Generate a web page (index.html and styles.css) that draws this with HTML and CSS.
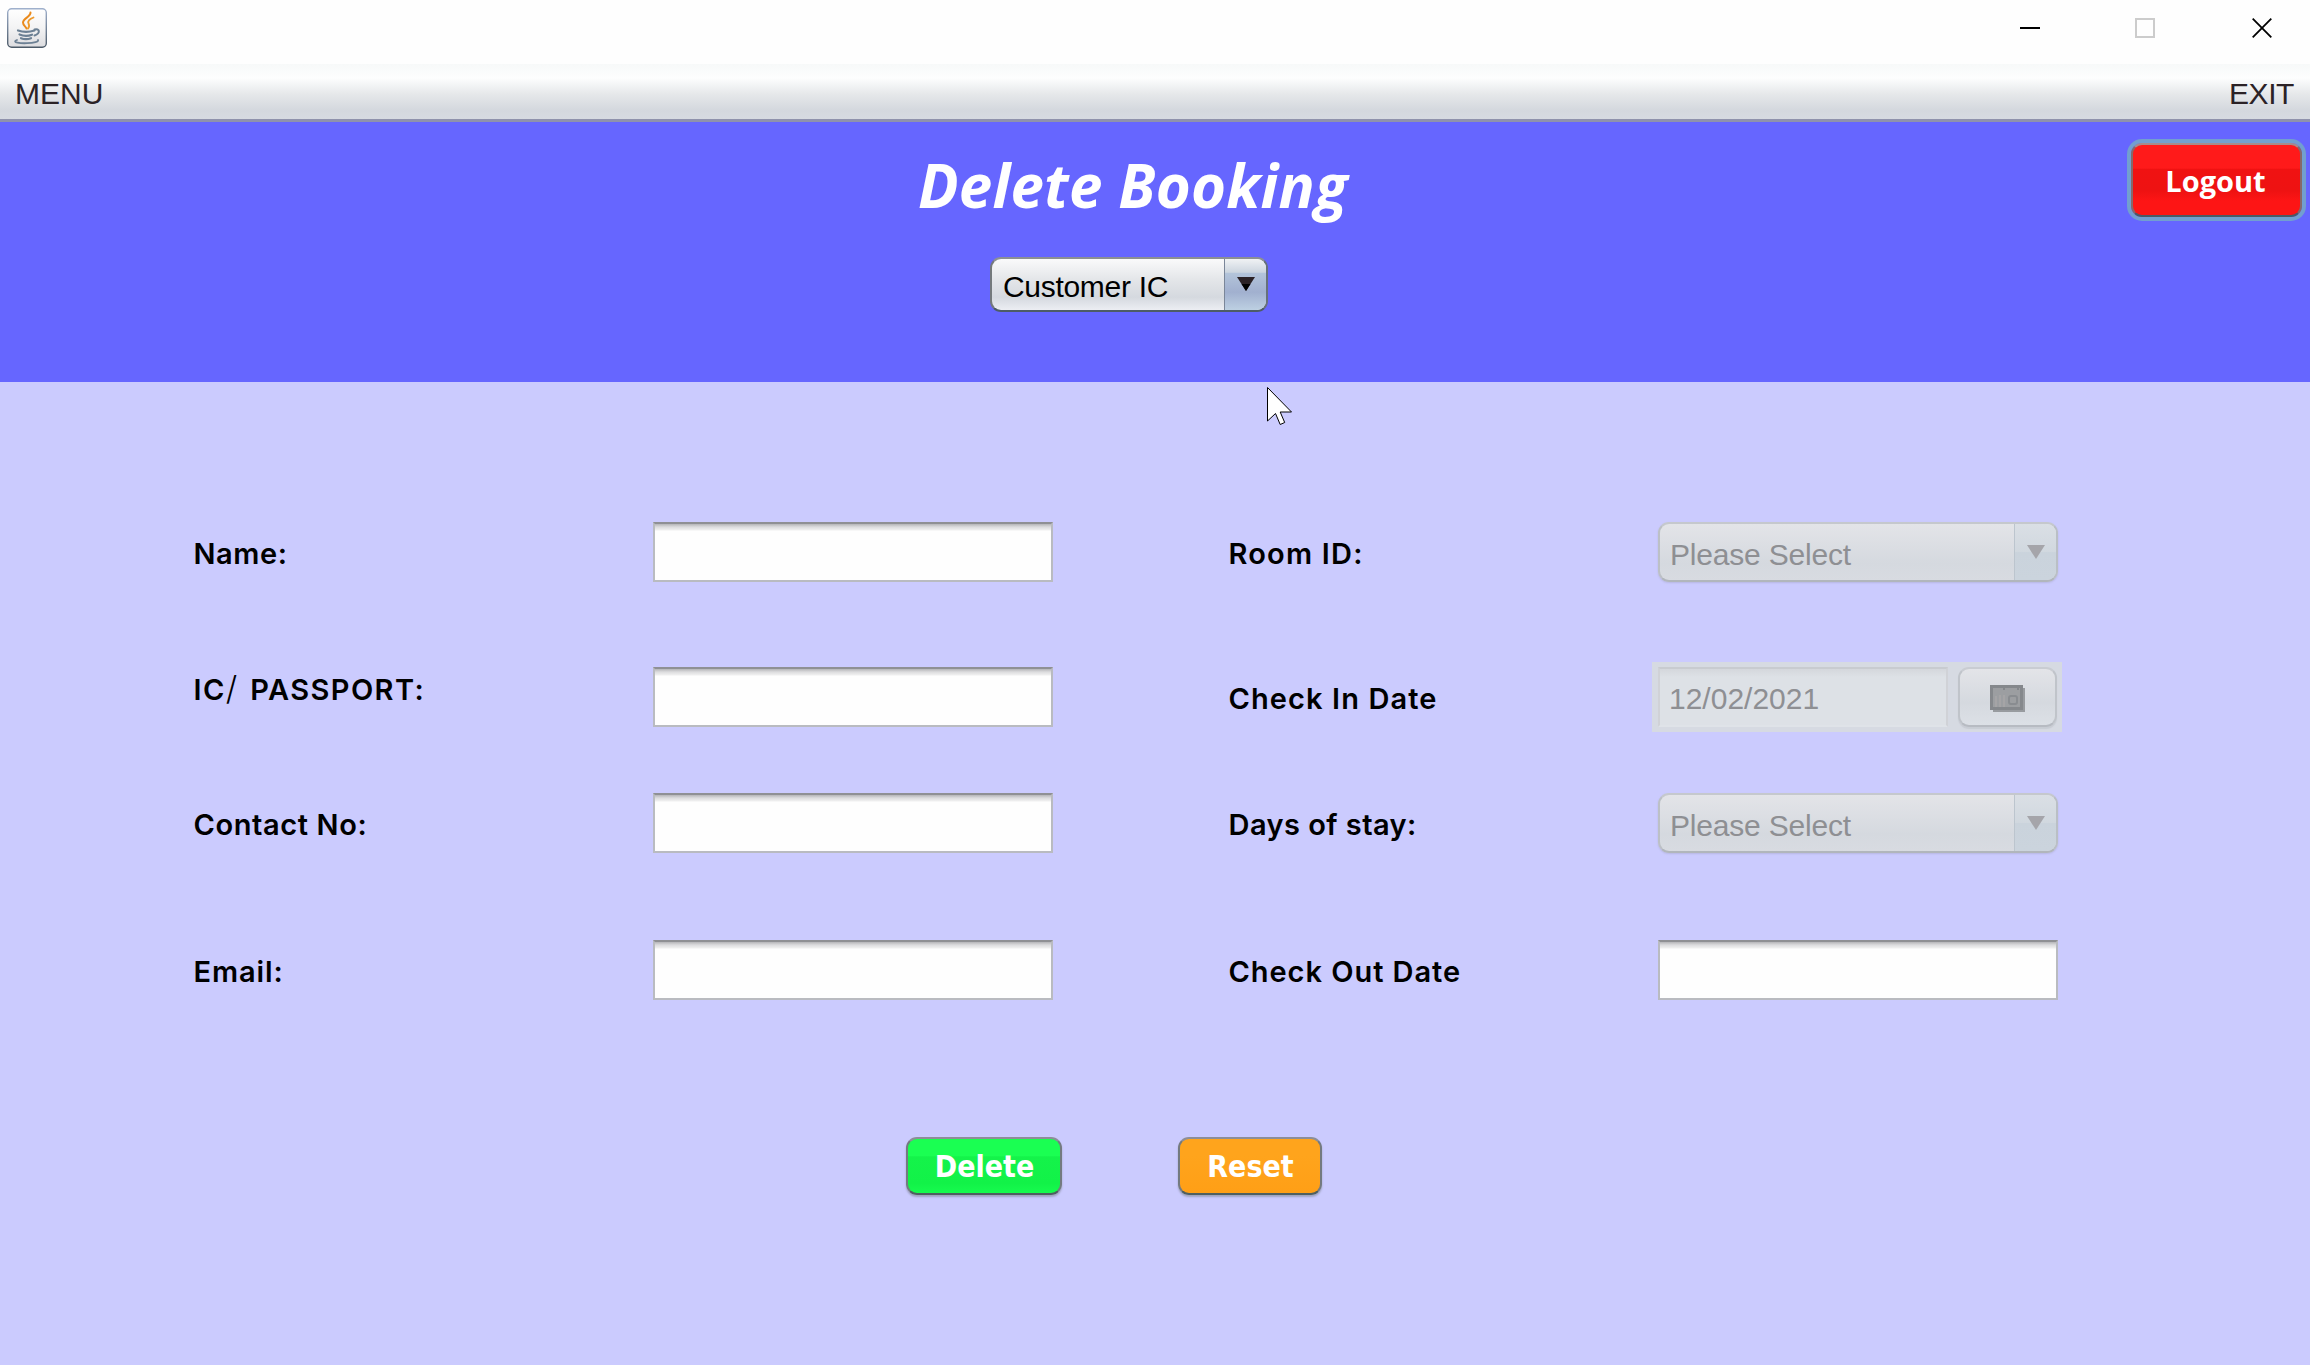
FILE: index.html
```html
<!DOCTYPE html>
<html lang="en">
<head>
<meta charset="utf-8">
<title>Delete Booking</title>
<link rel="stylesheet" href="styles.css">
</head>
<body>
<div class="titlebar">
  <svg class="app-icon" width="40" height="40" viewBox="0 0 40 40">
    <defs>
      <linearGradient id="tile" x1="0" y1="0" x2="0" y2="1"><stop offset="0" stop-color="#fff"/><stop offset=".5" stop-color="#f3f3f4"/><stop offset="1" stop-color="#dcdcdf"/></linearGradient>
      <linearGradient id="edge" x1="0" y1="0" x2="0" y2="1"><stop offset="0" stop-color="#9fb0cc"/><stop offset="1" stop-color="#4c5a68"/></linearGradient>
    </defs>
    <rect x=".7" y=".7" width="38.6" height="38.6" rx="4" fill="url(#tile)" stroke="url(#edge)" stroke-width="1.4"/>
    <g fill="none" stroke-linecap="round">
      <path d="M23.5 4.500c.5 4-7.500 6-7.500 10 0 3 3 4 3.500 6" stroke="#ea8a1c" stroke-width="2"/>
      <path d="M26.500 9.500c-4 1.500-6 3.500-5 6 1 2 1 3.500-.5 5" stroke="#ee9a2c" stroke-width="1.800"/>
      <path d="M11 22.500c5 1.800 12 1.500 16.500 0M12.500 26.500c4 1.600 9 1.500 12.500.2M14 30.200c3 1.200 7 1.100 10 0" stroke="#6c8094" stroke-width="2.200"/>
      <path d="M27.500 21.500c5-1.500 6.500 3.500 0 6" stroke="#6c8094" stroke-width="2"/>
      <path d="M10 32c-6 2.500 4 3.500 10 3.200 7-.2 12-1.500 11-3.200" stroke="#6c8094" stroke-width="1.800"/>
    </g>
  </svg>
  <div class="window-controls">
    <svg width="20" height="20" viewBox="0 0 20 20"><path d="M0 10h20" stroke="#000" stroke-width="2"/></svg>
    <svg width="20" height="20" viewBox="0 0 20 20"><rect x="1" y="1" width="18" height="18" fill="none" stroke="#ccc" stroke-width="2"/></svg>
    <svg width="20" height="20" viewBox="0 0 20 20"><path d="M.7.700l18.600 18.600M19.300.7L.7 19.300" stroke="#000" stroke-width="1.800"/></svg>
  </div>
</div>
<nav class="menubar"><span>MENU</span><span class="exit">EXIT</span></nav>
<header class="banner">
  <div class="search">
    <h1>Delete Booking</h1>
    <div class="combo active"><span class="value">Customer IC</span><span class="arrow"><svg width="18" height="14" viewBox="0 0 18 14"><path d="M0 0h18L9 14z" fill="#2b2226"/><path d="M4.500 7h9L9 14z" fill="#000"/></svg></span></div>
  </div>
  <button class="btn logout">Logout</button>
</header>
<main>
  <form class="form">
    <label class="l-name">Name:</label><input class="field" type="text">
    <label class="right l-room">Room ID:</label>
    <div class="combo disabled"><span class="value">Please Select</span><span class="arrow"><svg width="18" height="14" viewBox="0 0 18 14"><path d="M0 0h18L9 14z" fill="#a5a5aa"/></svg></span></div>

    <label class="l-ic">IC<span class="slash">/</span> PASSPORT:</label><input class="field" type="text">
    <label class="right l-in">Check In Date</label>
    <div class="datepicker">
      <span class="date">12/02/2021</span>
      <span class="picker">
        <svg width="35" height="27" viewBox="0 0 35 27"><path d="M3 3h32v24H3z" fill="#989b9f"/><path d="M0 0h33v25H0z" fill="#85888c"/><path d="M3 3h27v19H3z" fill="#9c9ea1"/><path d="M6 11v11M10 10v12M14 10v12" stroke="#a5a4a6" stroke-width="2"/><path d="M14 2v3M28 2v3" stroke="#85888c" stroke-width="2"/><rect x="19" y="11" width="8" height="8" rx="2" fill="none" stroke="#898c90" stroke-width="2"/></svg>
      </span>
    </div>

    <label class="l-contact">Contact No:</label><input class="field" type="text">
    <label class="right l-days">Days of stay:</label>
    <div class="combo disabled"><span class="value">Please Select</span><span class="arrow"><svg width="18" height="14" viewBox="0 0 18 14"><path d="M0 0h18L9 14z" fill="#a5a5aa"/></svg></span></div>

    <label class="l-email">Email:</label><input class="field" type="text">
    <label class="right l-out">Check Out Date</label><input class="field" type="text">
  </form>
  <div class="actions">
    <button class="btn delete">Delete</button>
    <button class="btn reset">Reset</button>
  </div>
</main>
<svg class="cursor" width="26" height="40" viewBox="0 0 26 40"><path d="M.5.500v33.500l8-7.500 4.700 11 4.500-2-4.500-10.500h11.300z" fill="#fff" stroke="#000" stroke-width="1"/></svg>
</body>
</html>
```
FILE: styles.css
```css
* { box-sizing: border-box; }
body {
  margin: 0;
  width: 2310px;
  height: 1365px;
  display: flex;
  flex-direction: column;
  overflow: hidden;
  background: #cbcbfe;
  font: 30px/34px "Liberation Sans", Arial, sans-serif;
  color: #000;
}
svg { display: block; flex: none; }

.titlebar {
  height: 64px;
  flex: none;
  display: flex;
  justify-content: space-between;
  padding: 8px 38px 0 7px;
  background: #fefefe;
}
.window-controls {
  display: grid;
  grid-template-columns: 115px 117px 20px;
  padding-top: 10px;
}

.menubar {
  height: 58px;
  flex: none;
  display: flex;
  justify-content: space-between;
  padding: 13px 16px 0 15px;
  color: #2b2226;
  background: linear-gradient(#f7f9f9 0, #fdfefe 14px, #e6e8ea 30px, #d4d8de 46px, #d6dae1 100%);
  border-bottom: 3px solid #8f92ac;
}
.exit { letter-spacing: -.4px; }

.banner {
  height: 260px;
  flex: none;
  display: flex;
  justify-content: space-between;
  padding: 17px 4px 0 918px;
  background: #6666ff;
}
.search { display: flex; flex-direction: column; }
h1 {
  margin: 4px 0 0;
  height: 114px;
  font: italic bold 60px/84px "Open Sans", "Noto Sans", sans-serif;
  letter-spacing: .2px;
  color: #fff;
  white-space: nowrap;
}

.combo {
  height: 60px;
  display: flex;
  border: 2px solid;
  border-radius: 11px;
  overflow: hidden;
}
.combo .value { flex: 1; padding: 14px 0 0 10px; letter-spacing: -.2px; white-space: nowrap; }
.combo .arrow { display: flex; justify-content: center; border-left: 1px solid; }
.combo.active {
  width: 278px;
  height: 55px;
  margin-left: 72px;
  border-color: #8c9093 #66717a #4d5c66 #74797c;
  background: linear-gradient(#fafafb, #e4e6e9 40%, #d5d9df 75%, #eceef3);
}
.combo.active .value { padding: 11px 0 0 11px; letter-spacing: -.3px; }
.combo.active .arrow {
  width: 42px;
  padding-top: 18px;
  border-color: #7a8699;
  background: linear-gradient(#f0f2f4, #ccd5df 26%, #b3c4da 28%, #a1b0cf 65%, #bdd0e2);
}
.combo.disabled {
  color: #8e8f93;
  border-color: #c5c8cd #babfc5 #b1b6bc #bcc0c6;
  background: linear-gradient(#e3e4e8, #d5d9df 70%, #d8dbe1);
  box-shadow: 0 1px 2px #b8b8e2;
}
.combo.disabled .arrow {
  width: 42px;
  padding-top: 21px;
  border-color: #bcc5ce;
  background: linear-gradient(#dadfe5, #d1d8df 49%, #cad3dc 51%, #cbd4dd);
}

.btn {
  padding: 0;
  color: #fff;
  border: 2px solid;
  border-radius: 11px;
  font: bold 29px/34px "Open Sans", "Noto Sans", sans-serif;
}
.logout {
  width: 171px;
  height: 74px;
  margin: 4px;
  padding: 2px 2px 0 0;
  border-color: #a58c8c #86696a #4b5a66;
  background: linear-gradient(#ff1a1a 33%, #f01212 35%, #ee1212 65%, #fd1515 80%);
  box-shadow: 0 0 0 4px #729fcf;
}

.form {
  display: grid;
  grid-template-columns: 459.500px 400px 605px 400px;
  grid-template-rows: 145px 125.500px 147.500px 60px;
  padding: 140px 0 0 193.500px;
}
.form label {
  height: 60px;
  padding-top: 15px;
  font: 600 29px/34px Inter, "Noto Sans", sans-serif;
  letter-spacing: .6px;
  white-space: nowrap;
}
.form label.right { padding-left: 175.500px; }
.form label.l-ic { padding-top: 5px; letter-spacing: 1.4px; }
.form label.l-room { letter-spacing: 1.2px; }
.form label.l-in { letter-spacing: 1.1px; }
.form label.l-days { letter-spacing: .45px; }
.form label.l-email { letter-spacing: .9px; }
.form label.l-out { letter-spacing: .95px; }
.slash { font-size: 33px; font-weight: 300; line-height: 1; margin-right: 3px; }
.field {
  width: 400px;
  height: 60px;
  border: 2px solid #b9bbc0;
  border-top: 2px solid #8f9094;
  background: linear-gradient(#b5b5b8, #dcdcde 3px, #f0f0f0 6px, #fefefe 7px);
  outline: none;
}

.datepicker {
  display: flex;
  align-items: flex-start;
  width: 410px;
  height: 70px;
  margin: -5px 0 0 -6px;
  padding: 5px 5px 0 6px;
  gap: 10px;
  background: #d6dae2;
}
.date {
  width: 290px;
  height: 60px;
  padding: 13px 0 0 9px;
  color: #8e8f93;
  border: 2px solid #d0d2d7;
  border-top-color: #c8cbd0;
  border-bottom-color: #dfe3e8;
  background: linear-gradient(#d4d7dc, #dde1e6 8px);
}
.picker {
  width: 99px;
  height: 60px;
  display: flex;
  justify-content: center;
  padding-top: 16px;
  border: 2px solid;
  border-color: #c9ccd2 #c0c4ca #b7bbc2;
  border-radius: 11px;
  background: linear-gradient(#e3e4e8, #d5d9df 60%, #dce0e6);
  box-shadow: 0 2px 1px #c8ccd4;
}

.actions { display: flex; gap: 116px; padding: 137px 0 0 906px; }
.delete, .reset {
  height: 58px;
  padding: 1px 0 0 1px;
  font: bold 30px/34px "DejaVu Sans Condensed", "DejaVu Sans", sans-serif;
  border-color: #8c8e98 #747a80 #4f5f60;
  box-shadow: 0 2px 2px #9fa3c0;
}
.delete { width: 156px; background: linear-gradient(#1aff52 31%, #14f34a 33%, #12f248 82%, #16fb4e); }
.reset { width: 144px; background: linear-gradient(#ffa41c 31%, #ff9f16); }

.cursor { position: absolute; left: 1267px; top: 387px; }
```
